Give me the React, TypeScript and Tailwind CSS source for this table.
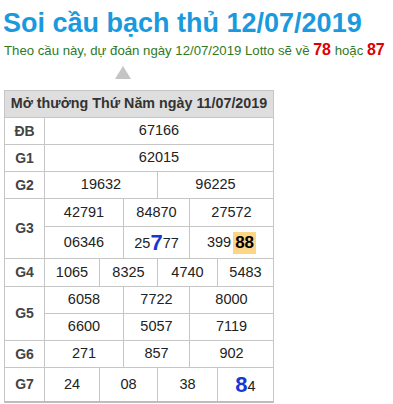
import React from "react";

const B = "border-[#c6c6c6]";

function Label({ children }: { children: React.ReactNode }) {
  return (
    <div className="w-[39px] shrink-0 flex items-center justify-center font-bold text-[14px] text-[#444]">
      {children}
    </div>
  );
}

function C({ w, children }: { w: string; children: React.ReactNode }) {
  return (
    <div className={`${w} shrink-0 flex items-center justify-center border-l border-[#c6c6c6] text-[14.5px] text-[#222]`}>
      {children}
    </div>
  );
}

export default function App() {
  return (
    <div className="bg-white w-[393px] h-[404px] overflow-hidden font-['Liberation_Sans',Arial,sans-serif] pl-[3px]">
      <h1 className="mt-[7px] text-[27px] leading-[32px] font-bold text-[#1a9ade]">
        Soi cầu bạch thủ 12/07/2019
      </h1>
      <p className="mt-[1px] ml-[1px] text-[13.2px] leading-[20px] text-[#2f7a1e] whitespace-nowrap">
        Theo cầu này, dự đoán ngày 12/07/2019 Lotto sẽ về{" "}
        <span className="text-[16px] leading-[20px] font-bold text-[#e00000]">78</span> hoặc{" "}
        <span className="text-[16px] leading-[20px] font-bold text-[#e00000]">87</span>
      </p>
      <div className="mt-[5px] ml-[112px] w-0 h-0 border-l-[8px] border-r-[8px] border-b-[13px] border-l-transparent border-r-transparent border-b-[#c4c4c4]" />
      <div className={`mt-[11px] ml-[1px] w-[270px] border-l border-r border-t border-b-2 ${B} border-b-[#bdbdbd]`}>
        <div className={`h-[27px] flex items-center justify-center bg-[#dedede] border-b ${B} font-bold text-[14.3px] text-[#333]`}>
          Mở thưởng Thứ Năm ngày 11/07/2019
        </div>
        <div className={`h-[27px] flex border-b ${B}`}>
          <Label>ĐB</Label>
          <C w="w-[229px]">67166</C>
        </div>
        <div className={`h-[27px] flex border-b ${B}`}>
          <Label>G1</Label>
          <C w="w-[229px]">62015</C>
        </div>
        <div className={`h-[27px] flex border-b ${B}`}>
          <Label>G2</Label>
          <C w="w-[113px]">19632</C>
          <C w="w-[116px]">96225</C>
        </div>
        <div className={`flex border-b ${B}`}>
          <Label>G3</Label>
          <div className="flex flex-col">
            <div className={`h-[28px] flex border-b ${B}`}>
              <C w="w-[79px]">42791</C>
              <C w="w-[66px]">84870</C>
              <C w="w-[84px]">27572</C>
            </div>
            <div className="h-[31px] flex">
              <C w="w-[79px]">06346</C>
              <C w="w-[66px]">
                <span className="pt-[3px]">25</span>
                <span className="text-[22px] font-bold text-[#1537d6] leading-none">7</span>
                <span className="pt-[3px]">77</span>
              </C>
              <C w="w-[84px]">
                <span>399</span>
                <span className="ml-[2px] px-[2px] h-[22px] flex items-center bg-[#fcd587] font-bold text-[17px] text-black">88</span>
              </C>
            </div>
          </div>
        </div>
        <div className={`h-[28px] flex border-b ${B}`}>
          <Label>G4</Label>
          <C w="w-[55px]">1065</C>
          <C w="w-[58px]">8325</C>
          <C w="w-[60px]">4740</C>
          <C w="w-[56px]">5483</C>
        </div>
        <div className={`flex border-b ${B}`}>
          <Label>G5</Label>
          <div className="flex flex-col">
            <div className={`h-[27px] flex border-b ${B}`}>
              <C w="w-[79px]">6058</C>
              <C w="w-[66px]">7722</C>
              <C w="w-[84px]">8000</C>
            </div>
            <div className="h-[26px] flex">
              <C w="w-[79px]">6600</C>
              <C w="w-[66px]">5057</C>
              <C w="w-[84px]">7119</C>
            </div>
          </div>
        </div>
        <div className={`h-[27px] flex border-b ${B}`}>
          <Label>G6</Label>
          <C w="w-[79px]">271</C>
          <C w="w-[66px]">857</C>
          <C w="w-[84px]">902</C>
        </div>
        <div className="h-[33px] flex">
          <Label>G7</Label>
          <C w="w-[55px]">24</C>
          <C w="w-[58px]">08</C>
          <C w="w-[60px]">38</C>
          <C w="w-[56px]">
            <span className="text-[22px] font-bold text-[#1537d6] leading-none">8</span>
            <span className="pt-[5px]">4</span>
          </C>
        </div>
      </div>
    </div>
  );
}
